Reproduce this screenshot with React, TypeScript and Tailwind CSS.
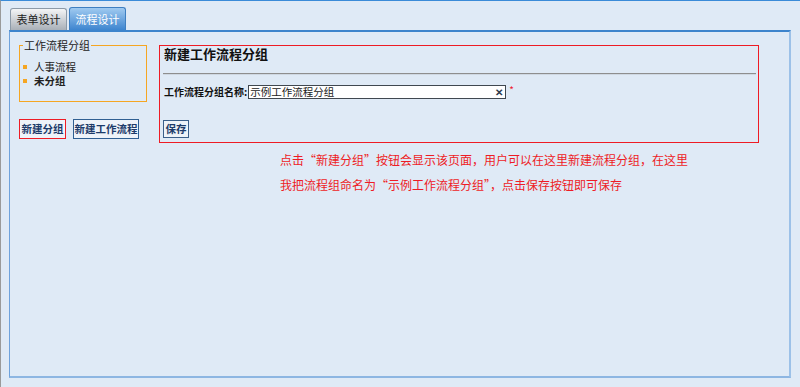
import React from "react";

const font = "font-['SimSun','Noto_Sans_CJK_SC',sans-serif]";

function Tabs() {
  return (
    <div className="flex h-[29px] items-end gap-[2px] pl-[9px]">
      <div className="flex h-[22px] w-[57px] items-center justify-center rounded-t-[3px] border border-b-0 border-[#8c9aa8] bg-gradient-to-b from-[#f4f5f6] to-[#a9b0b8] text-[11px] text-[#222]">
        表单设计
      </div>
      <div className="flex h-[23px] w-[57px] items-center justify-center rounded-t-[3px] border border-b-0 border-[#3e7fc1] bg-gradient-to-b from-[#9fcaf0] to-[#3d85cf] text-[11px] text-white">
        流程设计
      </div>
    </div>
  );
}

function GroupBox() {
  return (
    <fieldset className="-mt-[6px] h-[63px] w-[128px] border border-[#f5a623] px-[3px] pb-0 pt-[10px]">
      <legend className="px-[1px] text-[11px] leading-[12px] text-[#222]">工作流程分组</legend>
      <ul className="flex flex-col gap-[2px] text-[10.5px] leading-[12px] text-[#222]">
        <li className="flex items-center gap-[7px]">
          <span className="h-[4px] w-[4px] bg-[#f5a623]" />
          人事流程
        </li>
        <li className="flex items-center gap-[7px] font-bold">
          <span className="h-[4px] w-[4px] bg-[#f5a623]" />
          未分组
        </li>
      </ul>
    </fieldset>
  );
}

function NewGroupForm() {
  return (
    <div className="flex h-[98px] w-[600px] flex-col border border-[#ee1c25] px-[3px]">
      <h2 className="-mt-[1px] pl-[1px] text-[13px] font-bold leading-[18px] text-[#111]">新建工作流程分组</h2>
      <div className="mt-[10px] h-[2px] w-[593px] border-t border-[#8e8e8e] bg-[#cfd8e2]" />
      <div className="mt-[10px] flex items-center">
        <label className="pl-[1px] text-[10px] font-bold leading-[14px] text-[#111]">工作流程分组名称:</label>
        <div className="ml-[1px] flex h-[14px] w-[258px] items-center border border-[#404850] bg-white pl-[1px] pr-[2px]">
          <span className="flex-1 text-[10.5px] leading-[12px] text-[#222]">示例工作流程分组</span>
          <span className="text-[10px] font-bold leading-[10px] text-[#2b3a4d]">✕</span>
        </div>
        <span className="-mt-[4px] ml-[3px] text-[10px] leading-[10px] text-[#ee2030]">*</span>
      </div>
      <div className="mt-[21px]">
        <button className="flex h-[18px] w-[26px] items-center justify-center border border-[#3a5f8a] bg-[#eef3f9] text-[10.5px] font-bold text-[#1d3b6a]">
          保存
        </button>
      </div>
    </div>
  );
}

export default function App() {
  return (
    <div className={`h-[387px] w-[800px] overflow-hidden border-l border-t border-l-[#9a9a9a] border-t-[#3a8bd8] bg-[#dfeaf6] ${font}`}>
      <Tabs />
      <div className="ml-[8px] h-[348px] w-[782px] border-b-2 border-l border-r-2 border-t-2 border-b-[#8db6e2] border-l-[#6ea2dc] border-r-[#9cc1e8] border-t-[#3d84cc] pl-[9px] pt-[13px]">
        <div className="flex gap-[12px]">
          <div className="flex flex-col">
            <GroupBox />
            <div className="mt-[17px] flex gap-[7px]">
              <button className="flex h-[20px] w-[47px] items-center justify-center whitespace-nowrap border border-[#ee1c25] bg-[#eef3f9] text-[10.5px] font-bold text-[#1d3b6a]">
                新建分组
              </button>
              <button className="flex h-[20px] w-[66px] items-center justify-center whitespace-nowrap border border-[#2f5f92] bg-[#eef3f9] text-[10.5px] font-bold text-[#1d3b6a]">
                新建工作流程
              </button>
            </div>
          </div>
          <div className="flex flex-col">
            <NewGroupForm />
            <div className="ml-[121px] mt-[4px] text-[12px] leading-[25px] text-[#ee1c25]">
              <p>点击“新建分组”按钮会显示该页面，用户可以在这里新建流程分组，在这里</p>
              <p>我把流程组命名为“示例工作流程分组”，点击保存按钮即可保存</p>
            </div>
          </div>
        </div>
      </div>
    </div>
  );
}
